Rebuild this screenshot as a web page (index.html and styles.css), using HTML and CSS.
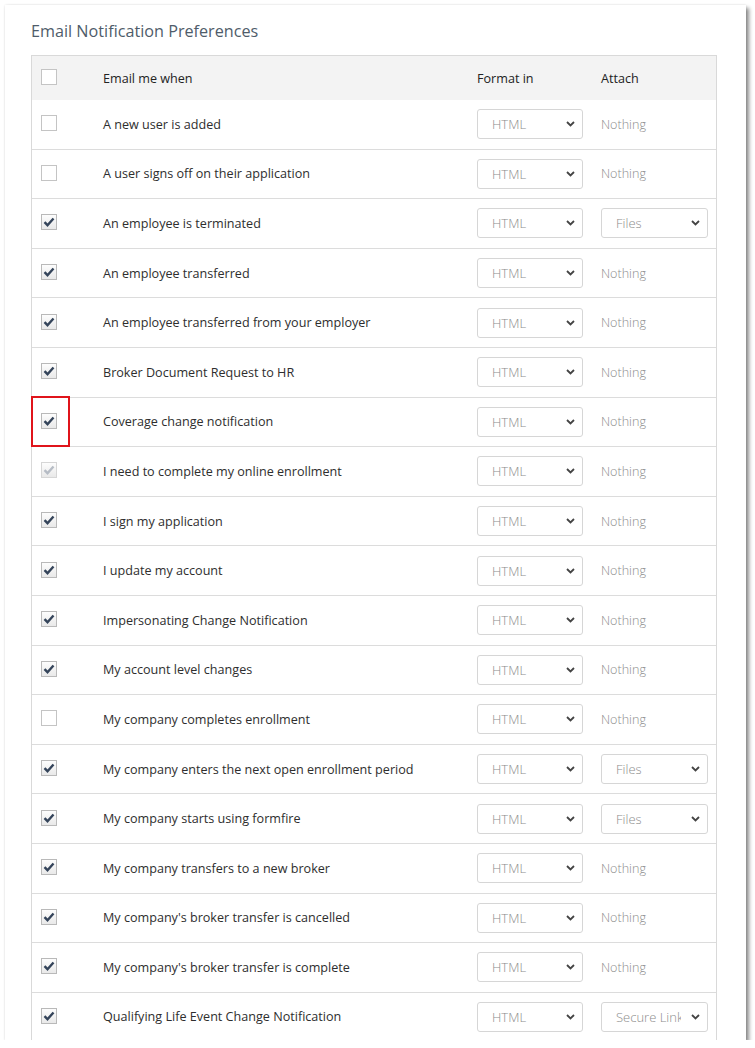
FILE: index.html
```html
<!DOCTYPE html>
<html lang="en">

<head>
    <meta charset="UTF-8">
    <title>Email Notification Preferences</title>
    <link rel="stylesheet" href="styles.css">
</head>

<body>
    <div id="panel">
        <h2 class="title">Email Notification Preferences</h2>
        <div id="prefs">
            <div class="row head">
                <div class="cell check"><span class="box"></span></div>
                <div class="cell name">Email me when</div>
                <div class="cell">Format in</div>
                <div class="cell">Attach</div>
            </div>

            <div class="row">
                <div class="cell check"><span class="box"></span></div>
                <div class="cell name">A new user is added</div>
                <div class="cell"><div class="select"><span class="val">HTML</span><svg width="9" height="6" viewBox="0 0 9 6"><path d="M1 1l3.5 3.5L8 1" fill="none" stroke="#444" stroke-width="1.8"/></svg></div></div>
                <div class="cell none">Nothing</div>
            </div>
            <div class="row">
                <div class="cell check"><span class="box"></span></div>
                <div class="cell name">A user signs off on their application</div>
                <div class="cell"><div class="select"><span class="val">HTML</span><svg width="9" height="6" viewBox="0 0 9 6"><path d="M1 1l3.5 3.5L8 1" fill="none" stroke="#444" stroke-width="1.8"/></svg></div></div>
                <div class="cell none">Nothing</div>
            </div>
            <div class="row">
                <div class="cell check"><span class="box on"><svg width="12" height="10" viewBox="0 0 12 10"><path d="M1.5 5.2l3 3L10.5 1.5" fill="none" stroke="currentColor" stroke-width="2.4"/></svg></span></div>
                <div class="cell name">An employee is terminated</div>
                <div class="cell"><div class="select"><span class="val">HTML</span><svg width="9" height="6" viewBox="0 0 9 6"><path d="M1 1l3.5 3.5L8 1" fill="none" stroke="#444" stroke-width="1.8"/></svg></div></div>
                <div class="cell"><div class="select wide"><span class="val">Files</span><svg width="9" height="6" viewBox="0 0 9 6"><path d="M1 1l3.5 3.5L8 1" fill="none" stroke="#444" stroke-width="1.8"/></svg></div></div>
            </div>
            <div class="row">
                <div class="cell check"><span class="box on"><svg width="12" height="10" viewBox="0 0 12 10"><path d="M1.5 5.2l3 3L10.5 1.5" fill="none" stroke="currentColor" stroke-width="2.4"/></svg></span></div>
                <div class="cell name">An employee transferred</div>
                <div class="cell"><div class="select"><span class="val">HTML</span><svg width="9" height="6" viewBox="0 0 9 6"><path d="M1 1l3.5 3.5L8 1" fill="none" stroke="#444" stroke-width="1.8"/></svg></div></div>
                <div class="cell none">Nothing</div>
            </div>
            <div class="row">
                <div class="cell check"><span class="box on"><svg width="12" height="10" viewBox="0 0 12 10"><path d="M1.5 5.2l3 3L10.5 1.5" fill="none" stroke="currentColor" stroke-width="2.4"/></svg></span></div>
                <div class="cell name">An employee transferred from your employer</div>
                <div class="cell"><div class="select"><span class="val">HTML</span><svg width="9" height="6" viewBox="0 0 9 6"><path d="M1 1l3.5 3.5L8 1" fill="none" stroke="#444" stroke-width="1.8"/></svg></div></div>
                <div class="cell none">Nothing</div>
            </div>
            <div class="row">
                <div class="cell check"><span class="box on"><svg width="12" height="10" viewBox="0 0 12 10"><path d="M1.5 5.2l3 3L10.5 1.5" fill="none" stroke="currentColor" stroke-width="2.4"/></svg></span></div>
                <div class="cell name">Broker Document Request to HR</div>
                <div class="cell"><div class="select"><span class="val">HTML</span><svg width="9" height="6" viewBox="0 0 9 6"><path d="M1 1l3.5 3.5L8 1" fill="none" stroke="#444" stroke-width="1.8"/></svg></div></div>
                <div class="cell none">Nothing</div>
            </div>
            <div class="row">
                <div class="cell check"><span class="box on"><svg width="12" height="10" viewBox="0 0 12 10"><path d="M1.5 5.2l3 3L10.5 1.5" fill="none" stroke="currentColor" stroke-width="2.4"/></svg></span><span class="marker"></span></div>
                <div class="cell name">Coverage change notification</div>
                <div class="cell"><div class="select"><span class="val">HTML</span><svg width="9" height="6" viewBox="0 0 9 6"><path d="M1 1l3.5 3.5L8 1" fill="none" stroke="#444" stroke-width="1.8"/></svg></div></div>
                <div class="cell none">Nothing</div>
            </div>
            <div class="row">
                <div class="cell check"><span class="box on off"><svg width="12" height="10" viewBox="0 0 12 10"><path d="M1.5 5.2l3 3L10.5 1.5" fill="none" stroke="currentColor" stroke-width="2.4"/></svg></span></div>
                <div class="cell name">I need to complete my online enrollment</div>
                <div class="cell"><div class="select"><span class="val">HTML</span><svg width="9" height="6" viewBox="0 0 9 6"><path d="M1 1l3.5 3.5L8 1" fill="none" stroke="#444" stroke-width="1.8"/></svg></div></div>
                <div class="cell none">Nothing</div>
            </div>
            <div class="row">
                <div class="cell check"><span class="box on"><svg width="12" height="10" viewBox="0 0 12 10"><path d="M1.5 5.2l3 3L10.5 1.5" fill="none" stroke="currentColor" stroke-width="2.4"/></svg></span></div>
                <div class="cell name">I sign my application</div>
                <div class="cell"><div class="select"><span class="val">HTML</span><svg width="9" height="6" viewBox="0 0 9 6"><path d="M1 1l3.5 3.5L8 1" fill="none" stroke="#444" stroke-width="1.8"/></svg></div></div>
                <div class="cell none">Nothing</div>
            </div>
            <div class="row">
                <div class="cell check"><span class="box on"><svg width="12" height="10" viewBox="0 0 12 10"><path d="M1.5 5.2l3 3L10.5 1.5" fill="none" stroke="currentColor" stroke-width="2.4"/></svg></span></div>
                <div class="cell name">I update my account</div>
                <div class="cell"><div class="select"><span class="val">HTML</span><svg width="9" height="6" viewBox="0 0 9 6"><path d="M1 1l3.5 3.5L8 1" fill="none" stroke="#444" stroke-width="1.8"/></svg></div></div>
                <div class="cell none">Nothing</div>
            </div>
            <div class="row">
                <div class="cell check"><span class="box on"><svg width="12" height="10" viewBox="0 0 12 10"><path d="M1.5 5.2l3 3L10.5 1.5" fill="none" stroke="currentColor" stroke-width="2.4"/></svg></span></div>
                <div class="cell name">Impersonating Change Notification</div>
                <div class="cell"><div class="select"><span class="val">HTML</span><svg width="9" height="6" viewBox="0 0 9 6"><path d="M1 1l3.5 3.5L8 1" fill="none" stroke="#444" stroke-width="1.8"/></svg></div></div>
                <div class="cell none">Nothing</div>
            </div>
            <div class="row">
                <div class="cell check"><span class="box on"><svg width="12" height="10" viewBox="0 0 12 10"><path d="M1.5 5.2l3 3L10.5 1.5" fill="none" stroke="currentColor" stroke-width="2.4"/></svg></span></div>
                <div class="cell name">My account level changes</div>
                <div class="cell"><div class="select"><span class="val">HTML</span><svg width="9" height="6" viewBox="0 0 9 6"><path d="M1 1l3.5 3.5L8 1" fill="none" stroke="#444" stroke-width="1.8"/></svg></div></div>
                <div class="cell none">Nothing</div>
            </div>
            <div class="row">
                <div class="cell check"><span class="box"></span></div>
                <div class="cell name">My company completes enrollment</div>
                <div class="cell"><div class="select"><span class="val">HTML</span><svg width="9" height="6" viewBox="0 0 9 6"><path d="M1 1l3.5 3.5L8 1" fill="none" stroke="#444" stroke-width="1.8"/></svg></div></div>
                <div class="cell none">Nothing</div>
            </div>
            <div class="row">
                <div class="cell check"><span class="box on"><svg width="12" height="10" viewBox="0 0 12 10"><path d="M1.5 5.2l3 3L10.5 1.5" fill="none" stroke="currentColor" stroke-width="2.4"/></svg></span></div>
                <div class="cell name">My company enters the next open enrollment period</div>
                <div class="cell"><div class="select"><span class="val">HTML</span><svg width="9" height="6" viewBox="0 0 9 6"><path d="M1 1l3.5 3.5L8 1" fill="none" stroke="#444" stroke-width="1.8"/></svg></div></div>
                <div class="cell"><div class="select wide"><span class="val">Files</span><svg width="9" height="6" viewBox="0 0 9 6"><path d="M1 1l3.5 3.5L8 1" fill="none" stroke="#444" stroke-width="1.8"/></svg></div></div>
            </div>
            <div class="row">
                <div class="cell check"><span class="box on"><svg width="12" height="10" viewBox="0 0 12 10"><path d="M1.5 5.2l3 3L10.5 1.5" fill="none" stroke="currentColor" stroke-width="2.4"/></svg></span></div>
                <div class="cell name">My company starts using formfire</div>
                <div class="cell"><div class="select"><span class="val">HTML</span><svg width="9" height="6" viewBox="0 0 9 6"><path d="M1 1l3.5 3.5L8 1" fill="none" stroke="#444" stroke-width="1.8"/></svg></div></div>
                <div class="cell"><div class="select wide"><span class="val">Files</span><svg width="9" height="6" viewBox="0 0 9 6"><path d="M1 1l3.5 3.5L8 1" fill="none" stroke="#444" stroke-width="1.8"/></svg></div></div>
            </div>
            <div class="row">
                <div class="cell check"><span class="box on"><svg width="12" height="10" viewBox="0 0 12 10"><path d="M1.5 5.2l3 3L10.5 1.5" fill="none" stroke="currentColor" stroke-width="2.4"/></svg></span></div>
                <div class="cell name">My company transfers to a new broker</div>
                <div class="cell"><div class="select"><span class="val">HTML</span><svg width="9" height="6" viewBox="0 0 9 6"><path d="M1 1l3.5 3.5L8 1" fill="none" stroke="#444" stroke-width="1.8"/></svg></div></div>
                <div class="cell none">Nothing</div>
            </div>
            <div class="row">
                <div class="cell check"><span class="box on"><svg width="12" height="10" viewBox="0 0 12 10"><path d="M1.5 5.2l3 3L10.5 1.5" fill="none" stroke="currentColor" stroke-width="2.4"/></svg></span></div>
                <div class="cell name">My company's broker transfer is cancelled</div>
                <div class="cell"><div class="select"><span class="val">HTML</span><svg width="9" height="6" viewBox="0 0 9 6"><path d="M1 1l3.5 3.5L8 1" fill="none" stroke="#444" stroke-width="1.8"/></svg></div></div>
                <div class="cell none">Nothing</div>
            </div>
            <div class="row">
                <div class="cell check"><span class="box on"><svg width="12" height="10" viewBox="0 0 12 10"><path d="M1.5 5.2l3 3L10.5 1.5" fill="none" stroke="currentColor" stroke-width="2.4"/></svg></span></div>
                <div class="cell name">My company's broker transfer is complete</div>
                <div class="cell"><div class="select"><span class="val">HTML</span><svg width="9" height="6" viewBox="0 0 9 6"><path d="M1 1l3.5 3.5L8 1" fill="none" stroke="#444" stroke-width="1.8"/></svg></div></div>
                <div class="cell none">Nothing</div>
            </div>
            <div class="row">
                <div class="cell check"><span class="box on"><svg width="12" height="10" viewBox="0 0 12 10"><path d="M1.5 5.2l3 3L10.5 1.5" fill="none" stroke="currentColor" stroke-width="2.4"/></svg></span></div>
                <div class="cell name">Qualifying Life Event Change Notification</div>
                <div class="cell"><div class="select"><span class="val">HTML</span><svg width="9" height="6" viewBox="0 0 9 6"><path d="M1 1l3.5 3.5L8 1" fill="none" stroke="#444" stroke-width="1.8"/></svg></div></div>
                <div class="cell"><div class="select wide"><span class="val cut">Secure Link</span><svg width="9" height="6" viewBox="0 0 9 6"><path d="M1 1l3.5 3.5L8 1" fill="none" stroke="#444" stroke-width="1.8"/></svg></div></div>
            </div>
        </div>
    </div>
</body>

</html>
```

FILE: styles.css
```css
    body {
        margin: 0;
        background-color: #fff;
        font: 12.6px "Open Sans", "Liberation Sans", Arial, sans-serif;
        color: #2e2e2e;
    }

    #panel {
        width: 741px;
        height: 1035px;
        margin: 5px 0 0 5px;
        padding: 0 29px 0 26px;
        box-sizing: border-box;
        overflow: hidden;
        background-color: #fff;
        box-shadow: 0 0 2px rgba(0,0,0,0.12), 3px 3px 4px rgba(0,0,0,0.45);
    }

    .title {
        margin: 0 0 13px 0;
        padding-top: 15px;
        font-size: 16.2px;
        line-height: 22px;
        font-weight: 400;
        color: #4f5c6a;
    }

    #prefs {
        border: 1px solid #d9d9d9;
        border-bottom: 0;
    }

    .row {
        display: grid;
        grid-template-columns: 62px 373px 124px 1fr;
        align-items: center;
        height: 49.6px;
        box-sizing: border-box;
        border-bottom: 1px solid #dcdcdc;
    }

    .row.head {
        height: 44px;
        background-color: #f3f3f3;
        border-bottom: 0;
        color: #222;
    }

    .cell {
        padding-left: 9px;
        white-space: nowrap;
    }

    .cell.check {
        position: relative;
        height: 100%;
        display: flex;
        align-items: center;
    }

    .row .cell:nth-child(3),
    .row .cell:nth-child(4) {
        padding-left: 10px;
    }

    .cell.none {
        color: #8c8c8c;
        font-weight: 300;
    }

    .box {
        width: 14px;
        height: 14px;
        border: 1px solid #c4c4c4;
        background-color: #fff;
        margin-top: -2px;
        display: flex;
        align-items: center;
        justify-content: center;
        color: #34445a;
    }

    .box.on {
        background: linear-gradient(#fdfdfd, #e9e9e9);
        border-color: #b9b9b9;
    }

    .box.off {
        color: #b6bcc5;
        border-color: #d6d6d6;
    }

    .marker {
        position: absolute;
        left: -1px;
        top: -2px;
        width: 35px;
        height: 47px;
        border: 2px solid #e0141b;
    }

    .select {
        width: 106px;
        height: 30px;
        box-sizing: border-box;
        border: 1px solid #d6d6d6;
        border-radius: 3px;
        padding: 0 7px 0 14px;
        display: flex;
        align-items: center;
        justify-content: space-between;
        background-color: #fff;
    }

    .select.wide {
        width: 107px;
    }

    .select .val {
        color: #8c8c8c;
        font-weight: 300;
        font-size: 13px;
    }

    .select .cut {
        width: 65px;
        overflow: hidden;
    }
```
